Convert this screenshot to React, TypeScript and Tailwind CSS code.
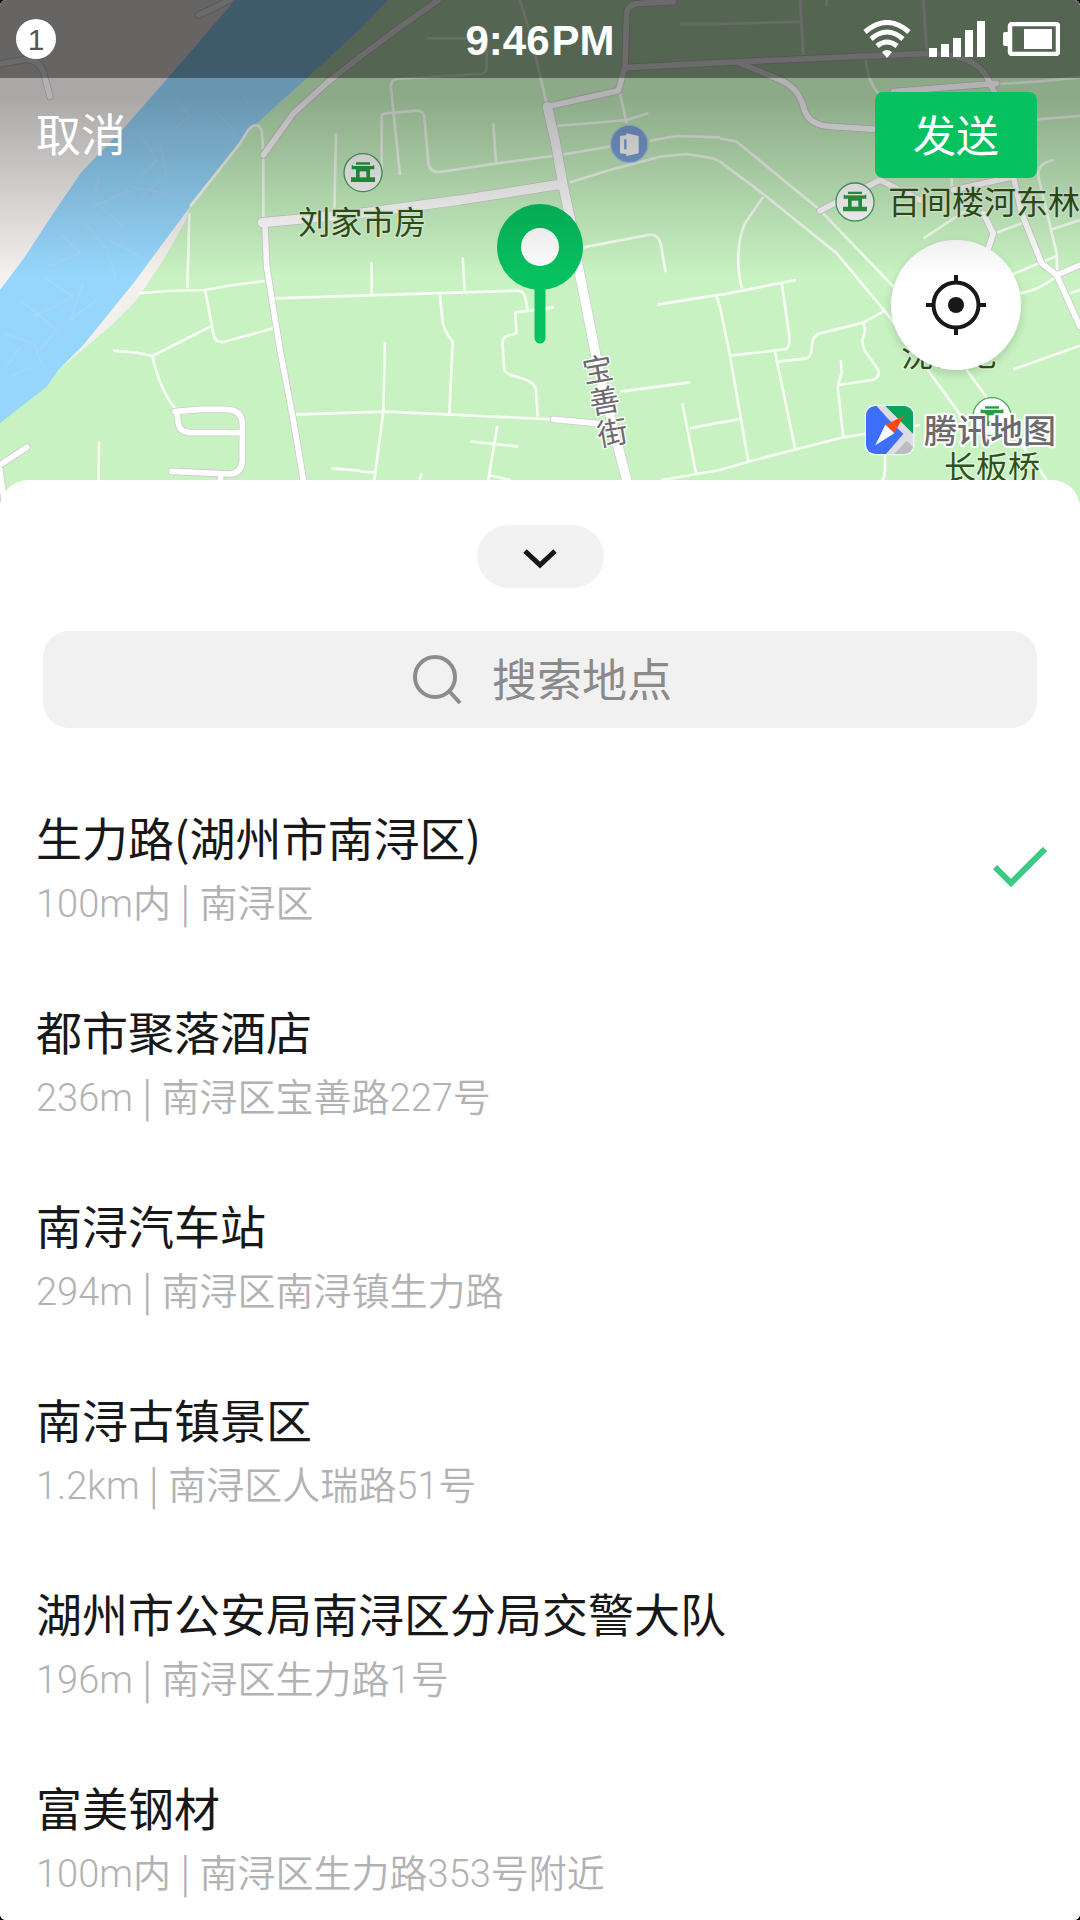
import { useState } from 'react';

type Place = { id: number; name: string; distance: string; address: string };

const places: Place[] = [
  { id: 1, name: '生力路(湖州市南浔区)', distance: '100m内', address: '南浔区' },
  { id: 2, name: '都市聚落酒店', distance: '236m', address: '南浔区宝善路227号' },
  { id: 3, name: '南浔汽车站', distance: '294m', address: '南浔区南浔镇生力路' },
  { id: 4, name: '南浔古镇景区', distance: '1.2km', address: '南浔区人瑞路51号' },
  { id: 5, name: '湖州市公安局南浔区分局交警大队', distance: '196m', address: '南浔区生力路1号' },
  { id: 6, name: '富美钢材', distance: '100m内', address: '南浔区生力路353号附近' },
];

// map tiles, each 1080 units wide
const tiles = [
  {
    x: 0,
    lanes:
      'M790 460V660 M720 430L745 390Q770 362 785 390L790 460 M720 430L570 620 M1008 400L1003 630 M568 640L562 865 M415 880L500 873L615 870L700 855L795 843 M820 895L1080 887 M615 870L640 1000Q645 1030 670 1026L820 985 M635 978L457 1068L410 1058L340 1052 M457 1068Q480 1170 525 1225 M875 1244L1080 1237 M297 1325L295 1500 M995 1405L1080 1412',
    roads:
      'M150 290L130 215Q115 180 80 178L0 192 M595 45L640 25L690 0 M1080 170L985 245L880 340L790 465 M525 1235L600 1228L680 1228Q725 1230 727 1270L727 1380Q725 1420 690 1422L515 1414 M530 1235L535 1270Q540 1297 570 1298L720 1298 M662 1425V1500 M80 1342L0 1395 M0 1410L12 1500 M795 680L800 800L840 1050L880 1260L910 1440L915 1500',
    avenues: 'M787 668L1080 640',
  },
  {
    x: 1080,
    lanes:
      'M200 115H380V205Q380 220 360 222L110 237Q90 240 93 265L120 525 M65 510V350Q65 340 80 340L170 332Q190 332 193 350L205 490Q210 518 240 516L410 490L600 465L750 440 M870 422L950 408L1080 412 M400 370L408 488 M480 0L510 100L560 310 M960 72H1080 M590 378L800 360L865 340 M780 280L800 370 M630 547L750 510L900 470L980 462L1060 475L1080 485 M670 742L870 704Q895 704 902 730L917 817 M0 887L470 872Q490 872 495 890L503 930 M35 787V885 M308 772L314 872 M240 885L247 960Q250 990 278 1025L268 1240 M582 922L465 938L470 1000L440 1008Q425 1015 428 1040L433 1110Q440 1125 480 1133Q525 1145 528 1170L533 1250 M75 1025L70 1235L43 1440 M0 1237L80 1235L580 1258 M892 914L1080 884 M1070 890L1082 930 M780 1175L990 1147 M967 1210L1008 1420 M990 1285L1080 1267 M905 1440L1080 1410 M330 1324L475 1340 M412 1277L385 1440 M385 1425L450 1440 M0 1415L45 1417 M185 1420L178 1440',
    roads:
      'M0 170L120 82L235 0 M560 320L775 272L795 200L800 40Q805 10 840 10L940 5 M795 203L1080 188 M580 1258L710 1270',
    avenues: 'M0 640L300 600L600 553 M562 320L585 420L610 560L640 700L655 800L720 1130L800 1440L815 1500',
  },
  {
    x: 2160,
    lanes:
      'M0 72L240 65 M240 0L250 165 M320 0V20 M610 0L620 155 M437 170Q440 240 475 280 M830 252L950 245L1080 232 M950 358L1080 348 M0 415L50 425L300 630L520 860 M0 485L140 590L350 760L500 940L725 1250 M130 590L75 670Q40 750 65 865 M0 885L228 840 M185 850L207 1000Q212 1045 195 1048L30 1067 M0 920L30 1067L85 1385 M165 1055L225 1345 M175 1085L260 1075Q275 1070 275 1040Q278 1005 300 1000L430 968L490 935 M430 970Q440 990 428 1015Q425 1040 440 1060L475 1110Q480 1135 455 1140L358 1155 M363 1080L365 1120Q350 1160 355 1180L370 1310 M0 1410L85 1385L370 1312L600 1275 M0 1268L60 1257 M495 1365V1410Q495 1435 480 1450 M740 1110L960 1410L980 1440 M880 1108L1080 1037 M1000 480Q950 490 955 530L1010 760L1012 825 M610 715L740 630 M825 700L910 668 M880 822L1010 768 M900 880Q960 870 1010 828 M1050 880L1080 870 M990 690L1080 660 M695 530V560',
    roads:
      'M0 188L620 160Q760 160 800 230L830 290 M60 190L170 235Q235 260 250 320Q265 380 340 380L470 388 M520 275L830 250 M300 632L480 540L600 600 M700 570L880 530 M1010 825L1080 795 M790 640L820 700L800 760 M880 530L905 640L965 790L1010 825L1080 980',
    avenues: '',
  },
];

const ripples =
  'M560 240l-30 60 40 50-50 40 M640 330l60 60 10 60 M700 240l50 80 M420 400l50 80-60 60 M300 520l-20 80 90 80 M480 430l20 90-80 80 M250 660l70 90 30 90 M330 720l110 60 M180 700l60 60-100 40 M130 830l90 60-120 60 M60 900l110 90-50 60 M250 850l-40 110 M10 1000l90 30 30 70 M30 1130l70-30 M390 560l110 20 M280 620l110-50 M210 960l80-60 M60 1040l-40 60';

function PavilionIcon({ x, y }: { x: number; y: number }) {
  return (
    <g transform={`translate(${x} ${y})`}>
      <circle r="57" fill="#fff" stroke="#4aa564" strokeWidth="4" />
      <path d="M-21 -31H21V-22H34V-10H21V14H36V28H-36V14H-21V-10H-34V-22H-21Z" fill="#2a9d43" />
      <path d="M-10 -4H10V14H-10Z" fill="#fff" />
      <path d="M-30 -22H30" stroke="#fff" strokeWidth="4" />
    </g>
  );
}

function MapCanvas() {
  return (
    <svg
      className="absolute inset-0 h-full w-full"
      viewBox="0 0 3240 1530"
      preserveAspectRatio="xMidYMin slice"
      fontFamily="'Noto Sans CJK SC', sans-serif"
    >
      <rect width="3240" height="1530" fill="#f3f0ee" />
      <path
        d="M1165 0L1080 88L915 240L760 380L720 430L570 620L555 665L490 780L410 900L330 980L175 1110L0 1270V1530H3240V0Z"
        fill="#c8f2c2"
      />
      <path
        d="M705 0L520 215L375 380L245 515L160 640L75 770L0 870V1270L140 1160L175 1110L250 1035L400 850L570 620L720 430L760 380L915 240L1080 88L1165 0Z"
        fill="#96d6fc"
      />
      <path d={ripples} fill="none" stroke="#b0d8f2" strokeWidth="6" opacity="0.5" />

      <g fill="none" strokeLinejoin="round">
        {tiles.map((t) => (
          <g key={t.x} transform={`translate(${t.x} 0)`}>
            <path d={t.lanes} stroke="#f7fff5" strokeWidth="8" />
          </g>
        ))}
        {tiles.map((t) => (
          <g key={t.x} transform={`translate(${t.x} 0)`} stroke="#cfc9ce" strokeLinecap="round">
            <path d={t.roads} strokeWidth="22" />
            <path d={t.avenues} strokeWidth="32" />
          </g>
        ))}
        {tiles.map((t) => (
          <g key={t.x} transform={`translate(${t.x} 0)`} stroke="#fff" strokeLinecap="round">
            <path d={t.roads} strokeWidth="17" />
            <path d={t.avenues} strokeWidth="28" />
          </g>
        ))}
      </g>

      {/* library marker */}
      <g transform="translate(1888 432)">
        <circle r="56" fill="#7fa5dd" stroke="#b5d0ee" strokeWidth="4" />
        <path d="M-28 -24L-10 -26L-8 -32L28 -24V28L-8 36L-10 30L-28 28Z" fill="#fff" />
        <path d="M-12 -14V16" stroke="#7fa5dd" strokeWidth="7" />
      </g>
      <PavilionIcon x={1089} y={518} />
      <PavilionIcon x={2565} y={606} />
      <PavilionIcon x={2976} y={1250} />

      <g fill="#2f5218" stroke="#e4f7df" strokeWidth="8" strokeLinejoin="round" paintOrder="stroke" fontSize="96">
        <text x="895" y="702">刘家市房</text>
        <text x="2664" y="642">百间楼河东林</text>
        <text x="2704" y="1098">沈氏宅</text>
        <text x="2832" y="1438">长板桥</text>
      </g>
      <g fill="#6f6a70" stroke="#fff" strokeWidth="8" strokeLinejoin="round" paintOrder="stroke" fontSize="92" textAnchor="middle">
        <text transform="translate(1793 1108) rotate(-10)" y="34">宝</text>
        <text transform="translate(1813 1202) rotate(-10)" y="34">善</text>
        <text transform="translate(1837 1298) rotate(-10)" y="34">街</text>
      </g>

      {/* map provider */}
      <g transform="translate(2598 1218)">
        <clipPath id="logo">
          <rect width="142" height="144" rx="28" />
        </clipPath>
        <rect x="-4" y="-4" width="150" height="152" rx="32" fill="#eef7f3" />
        <g clipPath="url(#logo)">
          <rect width="142" height="144" fill="#dcdce2" />
          <path d="M58 0H142V84Z" fill="#0ba45c" />
          <path d="M84 144L122 104L142 124V144Z" fill="#bcbcc4" />
          <path d="M0 0H32L66 38L112 84L60 144H0Z" fill="#3c70fa" />
          <path d="M113 30L58 56L85 82Z" fill="#fb4a17" />
          <path d="M28 118L58 56L85 82Z" fill="#fff" />
        </g>
        <text
          x="174"
          y="112"
          fontSize="99"
          fontWeight="500"
          fill="#6b6b6d"
          stroke="#fff"
          strokeWidth="12"
          strokeLinejoin="round"
          paintOrder="stroke"
        >
          腾讯地图
        </text>
      </g>
    </svg>
  );
}

function StatusBar() {
  return (
    <div className="relative grid h-[78px] grid-cols-3 items-center bg-black/40 px-4 text-white">
      <span className="flex h-10 w-10 items-center justify-center rounded-full bg-white font-['Liberation_Sans'] text-[30px] text-[#555]">
        1
      </span>
      <span className="pt-1 text-center font-['Liberation_Sans'] text-[42px] leading-none font-bold">
        9:46<span className="ml-0.5">PM</span>
      </span>
      <div className="flex items-center justify-end gap-[18px] pr-1">
        <svg className="h-[38px] w-12" viewBox="0 0 48 38" fill="none" stroke="currentColor" strokeWidth="5">
          <path d="M2 12Q24 -7 46 12" />
          <path d="M8 19Q24 5 40 19" />
          <path d="M14 26Q24 18 34 26" />
          <path d="M19 32Q24 28 29 32L24 38Z" fill="currentColor" stroke="none" />
        </svg>
        <svg className="h-9 w-14" viewBox="0 0 56 36" fill="currentColor">
          <path d="M0 27h8v9H0zM12 23h8v13h-8zM24 17h8v19h-8zM36 9h8v27h-8zM48 0h8v36h-8z" />
        </svg>
        <svg className="h-[34px] w-[57px]" viewBox="0 0 57 34" fill="currentColor">
          <rect x="7" y="2" width="48" height="30" rx="2" fill="none" stroke="currentColor" strokeWidth="4.5" />
          <rect x="0" y="10" width="7" height="14" rx="2" />
          <rect x="21" y="7" width="28" height="20" />
        </svg>
      </div>
    </div>
  );
}

export default function App() {
  const [selected, setSelected] = useState(1);
  const [query, setQuery] = useState('');

  return (
    <div className="min-h-screen bg-black font-['Noto_Sans_CJK_SC',sans-serif]">
      <div className="flex min-h-screen flex-col overflow-hidden rounded-[6px] bg-white">
        <header className="relative h-[510px] overflow-hidden">
          <MapCanvas />

          {/* center pin */}
          <svg className="absolute top-[204px] left-1/2 h-[140px] w-[86px] -translate-x-1/2" viewBox="0 0 86 140">
            <path d="M43 80V134" stroke="#07c160" strokeWidth="11" strokeLinecap="round" />
            <circle cx="43" cy="43" r="43" fill="#07c160" />
            <circle cx="43" cy="43" r="19" fill="#fff" />
          </svg>

          <button
            aria-label="定位"
            className="absolute top-[240px] right-[59px] flex h-[130px] w-[130px] items-center justify-center rounded-full bg-white shadow-[0_4px_10px_rgba(0,0,0,0.15)]"
          >
            <svg className="h-[60px] w-[60px]" viewBox="0 0 60 60" fill="none" stroke="#181818" strokeWidth="4">
              <circle cx="30" cy="30" r="22.5" />
              <circle cx="30" cy="30" r="8" fill="#181818" stroke="none" />
              <path d="M30 0V9M30 51V60M0 30H9M51 30H60" />
            </svg>
          </button>

          <div className="pointer-events-none absolute inset-x-0 top-0 h-[276px] bg-linear-to-b from-black/30 from-35% to-transparent" />

          <StatusBar />

          <div className="relative flex items-start justify-between pt-[14px] pr-[43px] pl-9">
            <button className="text-[45px] leading-[82px] text-white">取消</button>
            <button className="flex h-[86px] w-[162px] justify-center rounded-lg bg-[#07c160] text-[43px] leading-[82px] text-white">
              发送
            </button>
          </div>
        </header>

        <main className="relative -mt-[30px] flex flex-1 flex-col rounded-t-[28px] bg-white pt-[45px]">
          <button
            aria-label="收起"
            className="flex h-[63px] w-[127px] items-center justify-center self-center rounded-full bg-[#f2f2f2]"
          >
            <svg className="h-6 w-9" viewBox="0 0 36 24" fill="none" stroke="#181818" strokeWidth="5">
              <path d="M3 6L18 20L33 6" />
            </svg>
          </button>

          <label className="mx-[43px] mt-[43px] flex h-[97px] items-center justify-center gap-[30px] rounded-[26px] bg-[#f1f1f1] pl-2">
            <svg className="h-[50px] w-[50px]" viewBox="0 0 50 50" fill="none" stroke="#8c8c8c" strokeWidth="4">
              <circle cx="23" cy="22" r="20" />
              <path d="M37 36L48 48" />
            </svg>
            <input
              type="text"
              aria-label="搜索地点"
              placeholder="搜索地点"
              value={query}
              onChange={(e) => setQuery(e.target.value)}
              className="w-[184px] bg-transparent pb-1 text-[45px] leading-[64px] text-[#181818] outline-none placeholder:text-[#8a8a8a]"
            />
          </label>

          <ul className="mt-20 flex flex-col gap-[66px]">
            {places.map((p) => (
              <li key={p.id}>
                <button
                  onClick={() => setSelected(p.id)}
                  className="flex w-full items-center justify-between pr-[33px] pl-9 text-left"
                >
                  <span>
                    <span className="block text-[46px] leading-[56px] text-[#181818]">{p.name}</span>
                    <span className="mt-2 block font-['Roboto','Noto_Sans_CJK_SC',sans-serif] text-[38px] leading-[64px] font-[350] text-[#b2b2b2]">
                      {p.distance} <span className="font-['Noto_Sans_CJK_SC'] leading-none">|</span> {p.address}
                    </span>
                  </span>
                  {selected === p.id && (
                    <svg className="h-[50px] w-[54px]" viewBox="0 0 54 50" fill="none" stroke="#3cca83" strokeWidth="6">
                      <path d="M2 20L18 36L52 2" />
                    </svg>
                  )}
                </button>
              </li>
            ))}
          </ul>
        </main>
      </div>
    </div>
  );
}
